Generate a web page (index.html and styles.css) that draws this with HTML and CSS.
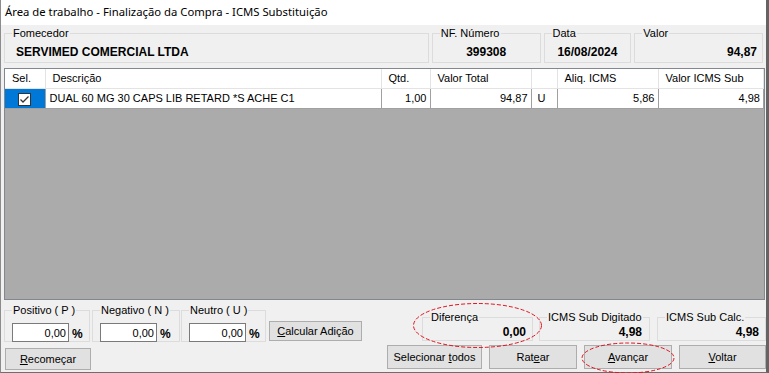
FILE: index.html
```html
<!DOCTYPE html>
<html lang="pt-BR">
<head>
<meta charset="UTF-8">
<meta name="viewport" content="width=device-width, initial-scale=1.0">
<title>Finalização da Compra - ICMS Substituição</title>
<link rel="stylesheet" href="styles.css">
</head>
<body>
<div class="window">
    <div class="titlebar">Área de trabalho - Finalização da Compra - ICMS Substituição</div>

    <div class="content">
        <div class="header">
            <fieldset class="box fornecedor">
                <legend>Fomecedor</legend>
                <div class="value indent">SERVIMED COMERCIAL LTDA</div>
            </fieldset>
            <fieldset class="box nf">
                <legend>NF. Número</legend>
                <div class="value center">399308</div>
            </fieldset>
            <fieldset class="box data">
                <legend>Data</legend>
                <div class="value center">16/08/2024</div>
            </fieldset>
            <fieldset class="box valor">
                <legend>Valor</legend>
                <div class="value right">94,87</div>
            </fieldset>
        </div>

        <div class="grid">
            <table>
                <colgroup>
                    <col class="c-sel">
                    <col class="c-desc">
                    <col class="c-qtd">
                    <col class="c-total">
                    <col class="c-un">
                    <col class="c-aliq">
                    <col>
                </colgroup>
                <thead>
                    <tr>
                        <th>Sel.</th>
                        <th>Descrição</th>
                        <th>Qtd.</th>
                        <th>Valor Total</th>
                        <th></th>
                        <th>Aliq. ICMS</th>
                        <th>Valor ICMS Sub</th>
                    </tr>
                </thead>
                <tbody>
                    <tr>
                        <td class="sel"><span class="check"><svg width="11" height="11" viewBox="0 0 11 11"><path d="M1.5 5.5 L4 8 L9.5 2.5" fill="none" stroke="#333" stroke-width="1.3"/></svg></span></td>
                        <td>DUAL 60 MG 30 CAPS LIB RETARD *S ACHE C1</td>
                        <td class="num">1,00</td>
                        <td class="num">94,87</td>
                        <td class="un">U</td>
                        <td class="num">5,86</td>
                        <td class="num">4,98</td>
                    </tr>
                </tbody>
            </table>
        </div>

        <div class="bottom">
            <fieldset class="box perc p1">
                <legend>Positivo ( P )</legend>
                <input type="text" value="0,00"><b>%</b>
            </fieldset>
            <fieldset class="box perc p2">
                <legend>Negativo ( N )</legend>
                <input type="text" value="0,00"><b>%</b>
            </fieldset>
            <fieldset class="box perc p3">
                <legend>Neutro ( U )</legend>
                <input type="text" value="0,00"><b>%</b>
            </fieldset>
            <button class="btn calc"><u>C</u>alcular Adição</button>
            <div class="spacer"></div>
            <fieldset class="box total t1">
                <legend>Diferença</legend>
                <div class="value right">0,00</div>
            </fieldset>
            <fieldset class="box total t2">
                <legend>ICMS Sub Digitado</legend>
                <div class="value right">4,98</div>
            </fieldset>
            <fieldset class="box total t3">
                <legend>ICMS Sub Calc.</legend>
                <div class="value right">4,98</div>
            </fieldset>
        </div>

        <div class="actions">
            <button class="btn recomecar"><u>R</u>ecomeçar</button>
            <div class="spacer"></div>
            <button class="btn selecionar">Selecionar <u>t</u>odos</button>
            <button class="btn ratear">Rat<u>e</u>ar</button>
            <button class="btn avancar"><u>A</u>vançar</button>
            <button class="btn voltar"><u>V</u>oltar</button>
        </div>
    </div>

    <!-- marcações em vermelho -->
    <svg class="mark mark-dif" width="131" height="47" viewBox="0 0 131 47">
        <ellipse cx="65.5" cy="23.5" rx="64" ry="22" fill="none" stroke="#e0141e" stroke-width="1" stroke-dasharray="4 2"/>
    </svg>
    <svg class="mark mark-avancar" width="96" height="34" viewBox="0 0 96 34">
        <ellipse cx="48" cy="16" rx="46" ry="15" fill="none" stroke="#e0141e" stroke-width="1" stroke-dasharray="4 2"/>
    </svg>
</div>
</body>
</html>
```

FILE: styles.css
```css
* {
    box-sizing: border-box;
}
body {
    margin: 0;
    width: 769px;
    height: 373px;
    overflow: hidden;
    font-family: "Liberation Sans", Arial, sans-serif;
    font-size: 11px;
    color: #000;
    background: #f0f0f0;
}
.window {
    position: relative;
    width: 769px;
    height: 373px;
    background: #f0f0f0;
    border-left: 1px solid #8c8c8c;
    border-right: 3px solid #646464;
    border-bottom: 1px solid #6e6e6e;
}
.titlebar {
    height: 25px;
    line-height: 24px;
    padding-left: 4px;
    background: #fff;
    font-family: "Noto Sans", "Open Sans", sans-serif;
    font-size: 11.3px;
    white-space: nowrap;
}
.content {
    padding: 2px 0 0 3px;
}

/* group boxes */
.box {
    margin: 0;
    padding: 0 7px;
    min-width: 0;
    border: 1px solid #dcdcdc;
}
.box legend {
    padding: 0 1px;
    line-height: 13px;
    font-size: 11px;
    white-space: nowrap;
}
.value {
    font-weight: bold;
    font-size: 12px;
    line-height: 15px;
    white-space: nowrap;
}
.indent {
    padding-left: 4px;
}
.center {
    text-align: center;
}
.right {
    text-align: right;
}

.header {
    display: flex;
    height: 36px;
}
.header .box {
    height: 36px;
    margin-right: 3px;
}
.header .value {
    margin-top: 5px;
}
.fornecedor { width: 426px; }
.nf { width: 109px; }
.data { width: 88px; }
.valor { width: 129px; margin-right: 0; padding-right: 5px; }

/* grade */
.grid {
    margin-top: 5px;
    width: 761px;
    height: 232px;
    background: #ababab;
    border: 1px solid #828790;
    overflow: hidden;
}
.grid table {
    width: 100%;
    border-collapse: collapse;
    table-layout: fixed;
}
.c-sel { width: 40px; }
.c-desc { width: 336px; }
.c-qtd { width: 49px; }
.c-total { width: 101px; }
.c-un { width: 26px; }
.c-aliq { width: 101px; }
.grid th {
    height: 19px;
    padding: 0 0 0 7px;
    font-weight: normal;
    text-align: left;
    background: #fff;
    border-right: 1px solid #e3e3e3;
    border-bottom: 1px solid #e3e3e3;
    white-space: nowrap;
}
.grid td {
    height: 20px;
    padding: 0 3px 0 4px;
    background: #fff;
    border-right: 1px solid #a0a0a0;
    border-bottom: 1px solid #a0a0a0;
    white-space: nowrap;
}
.grid td.num {
    text-align: right;
}
.grid td.un {
    padding-left: 6px;
}
.grid td.sel {
    background: #0078d7;
    text-align: center;
    padding: 0;
}
.check {
    display: inline-block;
    width: 13px;
    height: 13px;
    margin-top: 2px;
    background: #fff;
    border: 1px solid #333;
    vertical-align: middle;
}
.check svg {
    display: block;
}

/* parte de baixo */
.bottom {
    display: flex;
    align-items: flex-end;
    height: 38px;
    margin-top: 4px;
}
.perc {
    height: 38px;
    display: flex;
    align-items: flex-start;
}
.perc input {
    width: 57px;
    height: 19px;
    margin: 6px 0 0 0;
    padding: 0 2px;
    border: 1px solid #7a7a7a;
    background: #fff;
    font-family: "Liberation Sans", Arial, sans-serif;
    font-size: 11px;
    text-align: right;
}
.perc b {
    margin: 11px 0 0 3px;
    font-size: 12px;
    line-height: 13px;
}
.p1 { width: 86px; }
.p2 { width: 88px; margin-left: 2px; }
.p3 { width: 85px; margin-left: 1px; }
.spacer {
    flex: 1;
}
.total {
    height: 30px;
    margin-bottom: 1px;
}
.total .value {
    margin-top: 1px;
}
.t1 { width: 111px; padding-right: 6px; }
.t2 { width: 111px; margin-left: 6px; }
.t3 { width: 109px; margin-left: 7px; padding-right: 6px; }

.btn {
    padding: 0;
    background: #e1e1e1;
    border: 1px solid #adadad;
    font-family: "Liberation Sans", Arial, sans-serif;
    font-size: 11px;
    color: #000;
}
.calc {
    width: 93px;
    height: 20px;
    margin: 0 0 1px 3px;
}

.actions {
    display: flex;
    align-items: flex-start;
    height: 25px;
    margin-top: 3px;
}
.actions .btn {
    height: 24px;
    margin-left: 7px;
}
.actions .recomecar {
    width: 86px;
    height: 22px;
    margin: 3px 0 0 1px;
}
.selecionar { width: 95px; }
.ratear { width: 88px; }
.avancar { width: 88px; }
.voltar { width: 87px; }

.mark {
    position: absolute;
    display: block;
}
.mark-dif {
    left: 411px;
    top: 302px;
}
.mark-avancar {
    left: 579px;
    top: 342px;
}
```
